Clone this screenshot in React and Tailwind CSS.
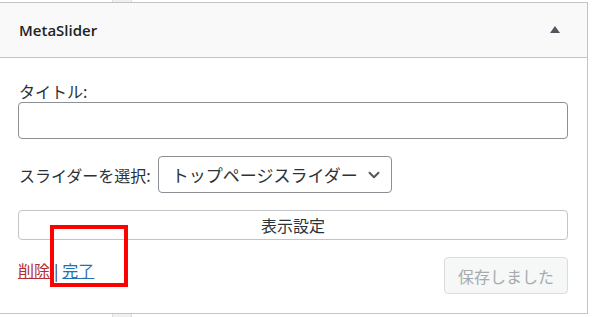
import React from 'react'

const jp = { fontFamily: '"Noto Sans CJK JP", "Noto Sans", sans-serif' }

function Chevron() {
  return (
    <svg width="18" height="18" viewBox="0 0 24 24" fill="none" stroke="#50575e" strokeWidth="2.6" strokeLinecap="round" strokeLinejoin="round">
      <path d="M6 9l6 6 6-6" />
    </svg>
  )
}

export default function App() {
  return (
    <div className="relative h-[317px] w-[593px] bg-white text-[#2c3338]" style={jp}>
      <div className="flex h-[2px]">
        <div className="ml-[112px] w-[20px] border-x border-[#dcdcde] bg-[#f0f0f1]" />
      </div>
      <div className="w-[588px] border-y border-r border-[#c3c4c7]">
        <div className="flex h-[55px] items-center justify-between border-b border-[#c3c4c7] bg-[#f9f9f9] pl-[19px] pr-[27px]">
          <span className="text-[15px] font-semibold text-[#1d2327]" style={{ fontFamily: '"Open Sans", "Noto Sans", sans-serif' }}>
            MetaSlider
          </span>
          <svg width="10" height="7" viewBox="0 0 10 7" className="mb-[1px]">
            <path d="M5 0L10 7H0z" fill="#50575e" />
          </svg>
        </div>
        <div className="flex flex-col px-[18px] pb-[19px] pt-[23px] text-[16px]">
          <label className="pl-px leading-[21px]">タイトル:</label>
          <div className="h-[37px] w-[550px] rounded-[4px] border border-[#8c8f94] bg-white" />
          <div className="mt-[17px] flex items-center">
            <span className="pl-px">スライダーを選択:</span>
            <div className="ml-[7px] flex h-[37px] w-[234px] items-center justify-between rounded-[4px] border border-[#8c8f94] bg-white pl-[13px] pr-[8px] text-[17px]">
              <span>トップページスライダー</span>
              <Chevron />
            </div>
          </div>
          <div className="mt-[17px] flex h-[30px] w-[550px] items-center justify-center rounded-[4px] border border-[#c3c4c7] bg-white text-[16px]">
            表示設定
          </div>
          <div className="mt-[17px] flex w-[550px] items-start justify-between">
            <div className="flex items-center gap-[4px] pt-[1px] text-[16px] leading-[24px]">
              <span className="text-[#b32d2e] underline">削除</span>
              <span>|</span>
              <span className="text-[#2271b1] underline">完了</span>
            </div>
            <div className="flex h-[37px] w-[124px] items-center justify-center rounded-[4px] border border-[#dcdcde] bg-[#f6f7f7] text-[#a7aaad]">
              保存しました
            </div>
          </div>
        </div>
      </div>
      <div className="flex h-[3px]">
        <div className="ml-[112px] w-[20px] border-x border-[#dcdcde] bg-[#f0f0f1]" />
      </div>
      <div className="absolute left-[50px] top-[225px] h-[62px] w-[78px] border-[4px] border-[#ff0000]" />
    </div>
  )
}
